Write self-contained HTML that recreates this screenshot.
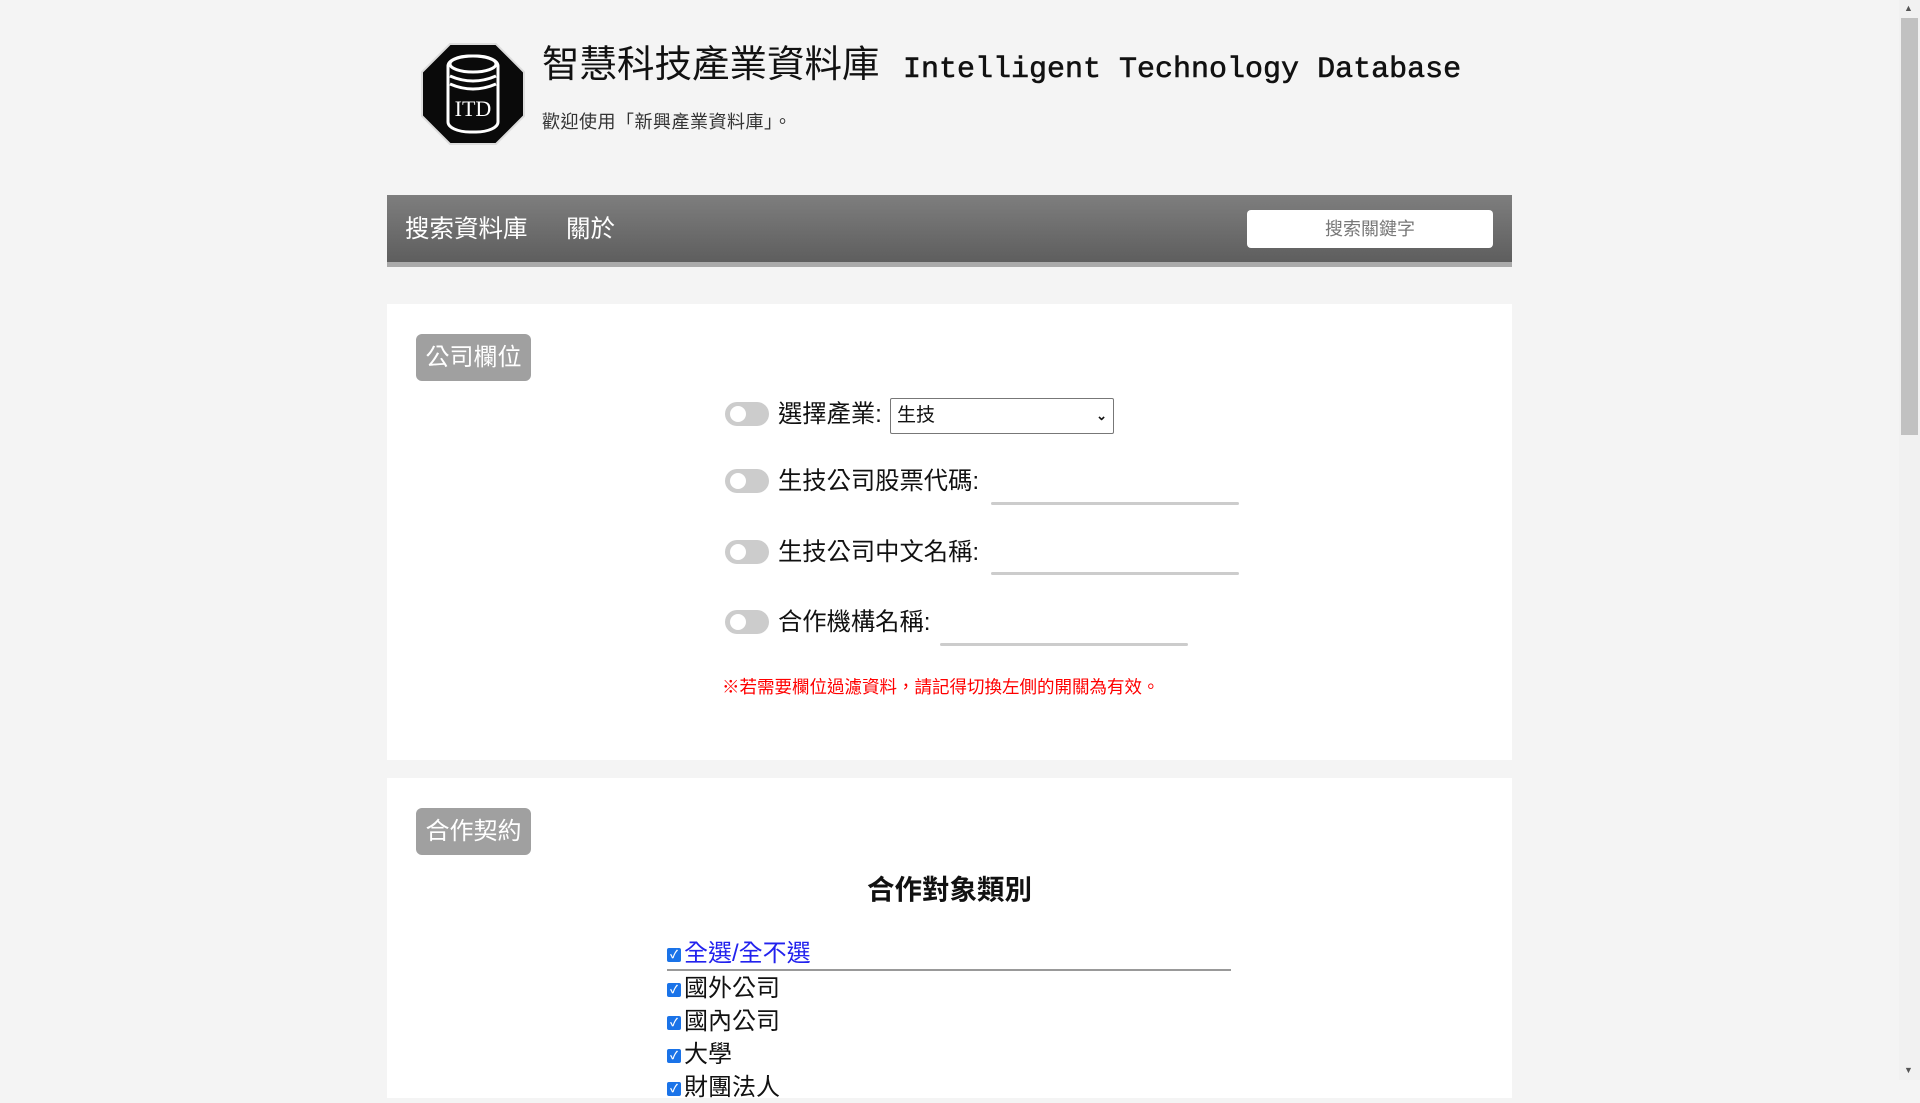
<!DOCTYPE html>
<html><head><meta charset="utf-8"><style>
*{margin:0;padding:0;box-sizing:border-box}
body{width:1920px;height:1080px;overflow:hidden;background:#f4f4f4;font-family:"Liberation Sans","Noto Sans CJK TC",sans-serif;position:relative;color:#111}
.a{position:absolute;white-space:nowrap}
.panel{position:absolute;left:387px;width:1125px;background:#fff}
.badge{position:absolute;left:29px;width:115px;height:47px;background:#a0a0a0;border-radius:6px;color:#fff;font-size:24px;line-height:47px;text-align:center}
.tog{position:absolute;left:338px;width:44px;height:24px;border-radius:12px;background:#ccc}
.tog:after{content:"";position:absolute;left:5px;top:4px;width:16px;height:16px;border-radius:50%;background:#fff}
.lbl{position:absolute;left:391px;font-size:24.3px;line-height:30px}
.ul{position:absolute;height:3px;background:#ccc;border-radius:2px}
.cb{display:inline-block;width:14px;height:14px;background:#1a73e8;border-radius:2px;color:#fff;font-size:11px;line-height:14px;text-align:center;vertical-align:middle;margin-right:3px;font-weight:bold}
.row{position:absolute;left:280px;font-size:24px;line-height:30px}
</style></head><body>
<svg class="a" style="left:420px;top:42px" width="106" height="104" viewBox="0 0 106 104">
<polygon points="30,2 76,2 104,30 104,74 76,102 30,102 2,74 2,30" fill="#0a0a0a" stroke="#ddd" stroke-width="2"/>
<rect x="28" y="14" width="50" height="76" rx="22" ry="10" fill="none" stroke="#fff" stroke-width="3"/>
<ellipse cx="53" cy="22" rx="23" ry="8" fill="none" stroke="#fff" stroke-width="3"/>
<path d="M30 34 Q53 44 76 34 M30 42 Q53 52 76 42" stroke="#fff" stroke-width="3" fill="none"/>
<text x="53" y="74" fill="#fff" font-family="Liberation Serif" font-size="22" text-anchor="middle">ITD</text>
</svg>
<div class="a" style="left:542px;top:41px;font-size:37.5px;line-height:46px">智慧科技產業資料庫</div>
<div class="a" style="left:903px;top:51px;font-family:'Liberation Mono',monospace;font-size:30px;line-height:38px;-webkit-text-stroke:0.6px #111">Intelligent Technology Database</div>
<div class="a" style="left:542px;top:110px;font-size:18px;line-height:24px;color:#333;letter-spacing:0.5px">歡迎使用「新興產業資料庫」。</div>
<div class="a" style="left:387px;top:195px;width:1125px;height:72px;background:linear-gradient(#7e7e7e,#5e5e5e);border-bottom:5px solid #aaa"></div>
<div class="a" style="left:405px;top:215px;font-size:24.5px;line-height:30px;color:#fff">搜索資料庫</div>
<div class="a" style="left:566px;top:215px;font-size:24.5px;line-height:30px;color:#fff">關於</div>
<div class="a" style="left:1247px;top:210px;width:246px;height:38px;background:#fff;border-radius:4px;font-size:18px;line-height:38px;text-align:center;color:#777">搜索關鍵字</div>

<div class="panel" style="top:304px;height:456px">
<div class="badge" style="top:30px">公司欄位</div>
<div class="tog" style="top:98px"></div>
<div class="lbl" style="top:96px">選擇產業:</div>
<div class="a" style="left:503px;top:94px;width:224px;height:36px;border:1px solid #777;border-radius:2px;font-size:19px;line-height:34px;padding-left:6px">生技<span style="position:absolute;right:6px;font-size:13px;font-weight:bold">&#8964;</span></div>
<div class="tog" style="top:165px"></div>
<div class="lbl" style="top:163px">生技公司股票代碼:</div>
<div class="ul" style="left:604px;width:248px;top:198px"></div>
<div class="tog" style="top:236px"></div>
<div class="lbl" style="top:234px">生技公司中文名稱:</div>
<div class="ul" style="left:604px;width:248px;top:268px"></div>
<div class="tog" style="top:306px"></div>
<div class="lbl" style="top:304px">合作機構名稱:</div>
<div class="ul" style="left:553px;width:248px;top:339px"></div>
<div class="a" style="left:335px;top:372px;font-size:17.5px;line-height:22px;color:#f00">※若需要欄位過濾資料，請記得切換左側的開關為有效。</div>
</div>

<div class="panel" style="top:778px;height:320px">
<div class="badge" style="top:30px">合作契約</div>
<div class="a" style="left:0;width:1125px;text-align:center;top:95px;font-size:27.5px;font-weight:bold;line-height:34px">合作對象類別</div>
<div class="row" style="top:161px;color:#22e"><span class="cb">✓</span>全選/全不選</div>
<div class="a" style="left:280px;top:191px;width:564px;height:2px;background:#999"></div>
<div class="row" style="top:196px"><span class="cb">✓</span>國外公司</div>
<div class="row" style="top:229px"><span class="cb">✓</span>國內公司</div>
<div class="row" style="top:262px"><span class="cb">✓</span>大學</div>
<div class="row" style="top:295px"><span class="cb">✓</span>財團法人</div>
</div>

<div class="a" style="left:1899px;top:0;width:21px;height:1080px;background:#f1f1f1"></div>
<div class="a" style="left:1901px;top:18px;width:17px;height:417px;background:#c1c1c1"></div>
<div class="a" style="left:1904px;top:3px;font-size:9px;color:#555">▲</div>
<div class="a" style="left:1904px;top:1065px;font-size:9px;color:#555">▼</div>
</body></html>
